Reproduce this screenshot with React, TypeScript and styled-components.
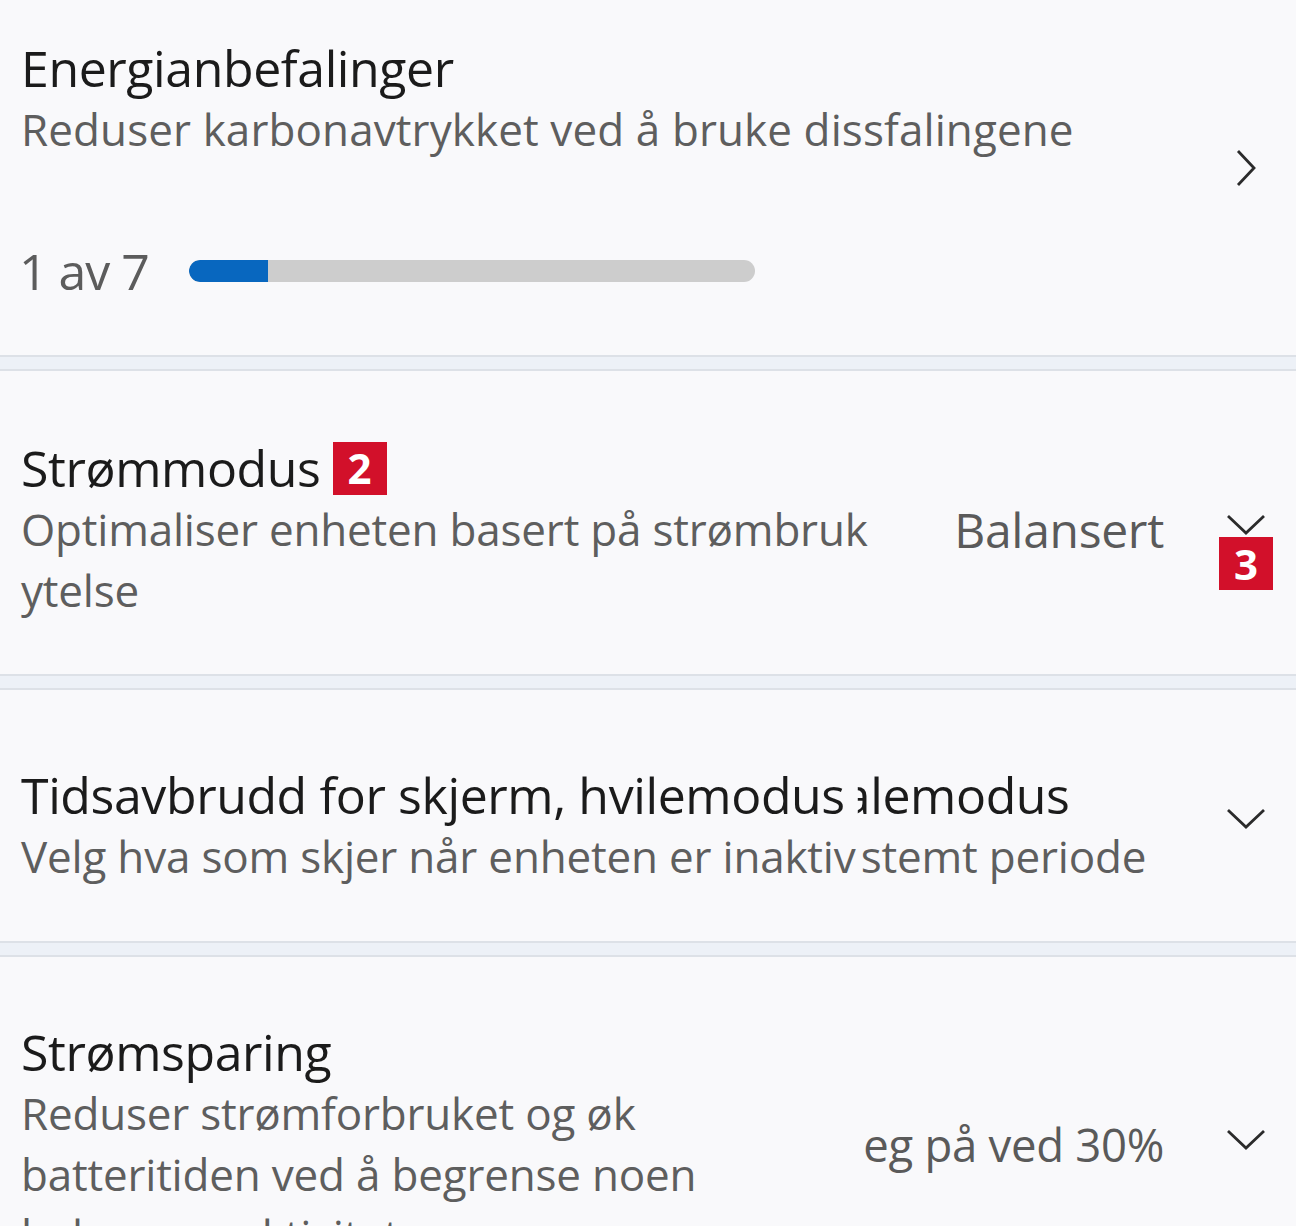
import React from 'react';
import styled, { createGlobalStyle } from 'styled-components';

const GlobalStyle = createGlobalStyle`
    html, body {
        margin: 0;
        padding: 0;
        background: #edf1f7;
        overflow: hidden;
    }
    body {
        font-family: "Open Sans", "Noto Sans", "Liberation Sans", sans-serif;
    }
`;

const Page = styled.div`
    height: 1226px;
    overflow: hidden;
    display: flex;
    flex-direction: column;
    gap: 12px;
    background: #edf1f7;
`;

const Card = styled.section<{ padTop: number; padBottom: number; first?: boolean }>`
    background: #f9f9fb;
    border-top: ${props => props.first ? 'none' : '2px solid #dde1e7'};
    border-bottom: 2px solid #dde1e7;
    padding: ${props => `${props.padTop}px 30px ${props.padBottom}px 21px`};
    flex-shrink: 0;
`;

const Row = styled.div`
    display: flex;
    align-items: center;
`;

const TextBlock = styled.div<{ width?: number }>`
    flex: ${props => props.width ? `0 0 ${props.width}px` : '1 1 auto'};
    min-width: 0;
`;

const Title = styled.div`
    font-size: 50px;
    line-height: 62px;
    color: #1b1b1b;
    letter-spacing: -0.4px;
    display: flex;
    align-items: center;
    white-space: nowrap;
`;

const Subtitle = styled.div<{ spread?: number }>`
    font-size: 44px;
    line-height: 61px;
    color: #5e5e5e;
    letter-spacing: ${props => props.spread ?? -0.2}px;
`;

// second title overlapping the first, only the tail of it shows
const Cut = styled.span`
    display: inline-block;
    clip-path: inset(0 0 0 15px);
    margin-left: -2px;
`;

const Tight = styled.span`
    margin-left: -6px;
`;

const Spacer = styled.div`
    flex: 1;
`;

const Value = styled.div<{ size?: number }>`
    font-size: ${props => props.size ?? 48}px;
    color: #5a5a5a;
    white-space: nowrap;
    letter-spacing: -0.3px;
`;

const ChevronBox = styled.div<{ gap?: number; lift?: number }>`
    position: relative;
    margin-left: ${props => props.gap ?? 62}px;
    margin-bottom: ${props => (props.lift ?? 0) * 2}px;
    width: 40px;
    display: flex;
    justify-content: center;
    align-items: center;
    flex-shrink: 0;
`;

const Badge = styled.span`
    display: inline-flex;
    align-items: center;
    justify-content: center;
    width: 54px;
    height: 53px;
    background: #d2102a;
    color: #fff;
    font-family: "Open Sans", "Noto Sans", sans-serif;
    font-weight: 700;
    font-size: 42px;
    line-height: 1;
    letter-spacing: 0;
    margin-left: 12px;
`;

const OverBadge = styled(Badge)`
    position: absolute;
    top: 24px;
    left: 50%;
    transform: translateX(-50%);
    margin-left: 0;
`;

const ProgressRow = styled.div`
    display: flex;
    align-items: center;
    margin-top: 80px;
    height: 62px;
`;

const Count = styled.span`
    font-size: 50px;
    color: #5c5c5c;
    letter-spacing: -1px;
    margin-left: -2px;
`;

const Track = styled.div`
    margin-left: 40px;
    width: 566px;
    height: 22px;
    border-radius: 11px;
    background: #cdcdcd;
    overflow: hidden;
    display: flex;
`;

const Fill = styled.div`
    height: 100%;
    background: #0867bf;
    border-radius: 11px 0 0 11px;
`;

const Grid = styled.div`
    display: grid;
    grid-template-columns: 1fr 40px;
    align-items: start;
`;

const RightChevron = () => (
    <svg width="22" height="40" viewBox="0 0 22 40">
        <path d="M3 3 L19 20 L3 37" fill="none" stroke="#2b2b2b" strokeWidth="2.8" />
    </svg>
);

const DownChevron = () => (
    <svg width="40" height="22" viewBox="0 0 40 22">
        <path d="M2 3 L20 20 L38 3" fill="none" stroke="#2b2b2b" strokeWidth="2.8" />
    </svg>
);

const App: React.FC = () => {
    const done = 1;
    const total = 7;
    return (
        <React.Fragment>
            <GlobalStyle />
            <Page>
                <Card first padTop={37} padBottom={53}>
                    <Grid>
                        <div>
                            <Title>Energianbefalinger</Title>
                            <Subtitle spread={0.1}>Reduser karbonavtrykket ved å bruke dissfalingene</Subtitle>
                            <ProgressRow>
                                <Count>1 av 7</Count>
                                <Track>
                                    <Fill style={{ width: `${(done / total) * 100 - 0.3}%` }} />
                                </Track>
                            </ProgressRow>
                        </div>
                        <ChevronBox gap={0} style={{ marginTop: 111 }}>
                            <RightChevron />
                        </ChevronBox>
                    </Grid>
                </Card>

                <Card padTop={66} padBottom={53}>
                    <Row>
                        <TextBlock width={880}>
                            <Title>Strømmodus<Badge>2</Badge></Title>
                            <Subtitle>Optimaliser enheten basert på strømbruk ytelse</Subtitle>
                        </TextBlock>
                        <Spacer />
                        <Value>Balansert</Value>
                        <ChevronBox lift={5}>
                            <DownChevron />
                            <OverBadge>3</OverBadge>
                        </ChevronBox>
                    </Row>
                </Card>

                <Card padTop={74} padBottom={54}>
                    <Row>
                        <TextBlock>
                            <Title>Tidsavbrudd for skjerm, hvilemodus<Cut>alemodus</Cut></Title>
                            <Subtitle>Velg hva som skjer når enheten er inaktiv <Tight>stemt periode</Tight></Subtitle>
                        </TextBlock>
                        <ChevronBox lift={8}>
                            <DownChevron />
                        </ChevronBox>
                    </Row>
                </Card>

                <Card padTop={64} padBottom={48}>
                    <Row>
                        <TextBlock width={720}>
                            <Title>Strømsparing</Title>
                            <Subtitle>Reduser strømforbruket og øk batteritiden ved å begrense noen bakgrunnsaktivitet</Subtitle>
                        </TextBlock>
                        <Spacer />
                        <Value size={45.5}>eg på ved 30%</Value>
                        <ChevronBox lift={5}>
                            <DownChevron />
                        </ChevronBox>
                    </Row>
                </Card>
            </Page>
        </React.Fragment>
    );
};

export default App;
